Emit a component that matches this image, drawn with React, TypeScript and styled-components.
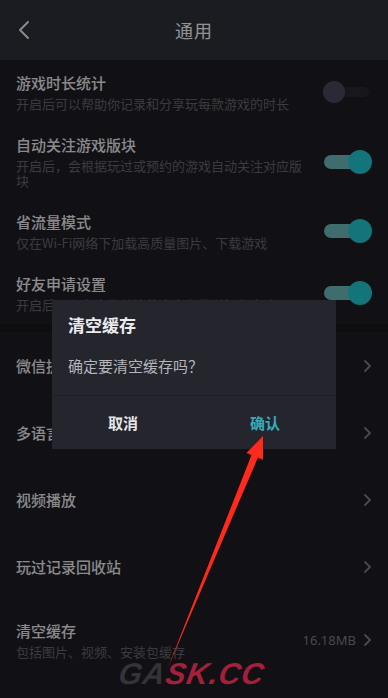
import React, { FC } from 'react';
import styled, { createGlobalStyle } from 'styled-components';

const GlobalStyle = createGlobalStyle`
  html, body {
    margin: 0;
    padding: 0;
    background: #1c1c23;
    overflow: hidden;
  }
  body {
    font-family: "Noto Sans CJK SC", "Noto Sans", "Liberation Sans", sans-serif;
  }
`;

// page colours are the un-dimmed values; the modal mask darkens them
const Page = styled.div`
  position: relative;
  width: 388px;
  height: 698px;
  background: #1c1c23;
  overflow: hidden;
`;

const Header = styled.div`
  height: 60px;
  display: flex;
  align-items: center;
  justify-content: center;
  position: relative;
  background: #2d2f37;
`;

const BackButton = styled.div`
  position: absolute;
  left: 16px;
  top: 20px;
  width: 16px;
  height: 20px;
  display: flex;
  align-items: center;
  justify-content: center;
`;

const HeaderTitle = styled.div`
  font-size: 18px;
  color: #f2f2f4;
  letter-spacing: 1px;
`;

const SwitchList = styled.div`
  display: flex;
  flex-direction: column;
  padding-top: 1px;
`;

const SwitchRow = styled.div`
  display: flex;
  align-items: center;
  justify-content: space-between;
  padding: 12px 17px 12px 16px;
`;

const TextCol = styled.div`
  display: flex;
  flex-direction: column;
  max-width: 290px;
`;

const Title = styled.div`
  font-size: 15px;
  line-height: 20px;
  font-weight: 500;
  color: #e6e6e8;
`;

const Sub = styled.div`
  margin-top: 3px;
  font-size: 13px;
  line-height: 15px;
  color: #636369;
`;

const Toggle = styled.div<{ $on: boolean }>`
  position: relative;
  width: 48px;
  height: 24px;
  flex-shrink: 0;

  &::before {
    content: '';
    position: absolute;
    left: ${(p) => (p.$on ? '1px' : '3px')};
    right: ${(p) => (p.$on ? '10px' : '2px')};
    top: ${(p) => (p.$on ? '5px' : '7px')};
    height: ${(p) => (p.$on ? '14px' : '10px')};
    border-radius: 7px;
    background: ${(p) => (p.$on ? '#69b5b6' : '#29292f')};
  }

  &::after {
    content: '';
    position: absolute;
    top: ${(p) => (p.$on ? '0' : '1px')};
    left: ${(p) => (p.$on ? '25px' : '0')};
    width: ${(p) => (p.$on ? '24px' : '22px')};
    height: ${(p) => (p.$on ? '24px' : '22px')};
    border-radius: 50%;
    background: ${(p) => (p.$on ? '#20c3cc' : '#47475a')};
  }
`;

const SectionGap = styled.div`
  height: 8px;
  background: #16161b;
`;

const NavRow = styled.div<{ $tall?: boolean }>`
  height: ${(p) => (p.$tall ? '80px' : '67px')};
  display: flex;
  align-items: center;
  justify-content: space-between;
  padding: 0 16px;
`;

const NavRight = styled.div`
  display: flex;
  align-items: center;
  gap: 6px;
`;

const SizeText = styled.span`
  font-family: "Noto Sans", "Liberation Sans", sans-serif;
  font-size: 13px;
  color: #7a7a80;
`;

const Mask = styled.div`
  position: absolute;
  inset: 0;
  background: rgba(0, 0, 0, 0.4);
  display: flex;
  justify-content: center;
  padding-top: 300px;
`;

const Dialog = styled.div`
  width: 284px;
  height: 149px;
  background: #25252e;
  display: flex;
  flex-direction: column;
`;

const DialogBody = styled.div`
  height: 96px;
  padding: 14px 16px 0;
  box-sizing: border-box;
  border-bottom: 1px solid #1f1f27;
`;

const DialogTitle = styled.div`
  font-size: 17px;
  line-height: 22px;
  font-weight: 700;
  color: #ececee;
`;

const DialogText = styled.div`
  margin-top: 20px;
  font-size: 15px;
  line-height: 20px;
  color: #b5b5ba;
`;

const DialogFooter = styled.div`
  flex: 1;
  display: grid;
  grid-template-columns: 1fr 1fr;
  align-items: center;
  padding-bottom: 1px;
`;

const DialogButton = styled.div<{ $primary?: boolean }>`
  text-align: center;
  font-size: 15px;
  font-weight: 700;
  color: ${(p) => (p.$primary ? '#3aaab6' : '#e4e4e6')};
`;

const Annotation = styled.svg`
  position: absolute;
  left: 0;
  top: 0;
  pointer-events: none;
`;

const Watermark = styled.div`
  position: absolute;
  left: 119px;
  top: 656px;
  font-family: "Liberation Sans", "DejaVu Sans", sans-serif;
  font-size: 30px;
  line-height: 36px;
  font-weight: 700;
  font-style: italic;
  letter-spacing: 1px;
  transform: skewX(-10deg);
  color: #a31f3c;
`;

const Gray = styled.span`
  color: #333338;
`;

const Chevron: FC<{ color?: string }> = ({ color = '#7a7a84' }) => (
  <svg width="10" height="14" viewBox="0 0 10 14">
    <path d="M3 2 L8 7 L3 12" fill="none" stroke={color} strokeWidth="1.8" strokeLinecap="round" strokeLinejoin="round" />
  </svg>
);

type SwitchItem = { title: string; sub: string; on: boolean };

const switches: SwitchItem[] = [
  { title: '游戏时长统计', sub: '开启后可以帮助你记录和分享玩每款游戏的时长', on: false },
  { title: '自动关注游戏版块', sub: '开启后，会根据玩过或预约的游戏自动关注对应版块', on: true },
  { title: '省流量模式', sub: '仅在Wi-Fi网络下加载高质量图片、下载游戏', on: true },
  { title: '好友申请设置', sub: '开启后，仅允许你关注的人向你发送好友申请', on: true },
];

const navs = ['微信提醒设置', '多语言', '视频播放', '玩过记录回收站'];

const App: FC = () => {
  return (
    <Page>
      <GlobalStyle />
      <Header>
        <BackButton>
          <svg width="12" height="20" viewBox="0 0 12 20">
            <path d="M10 2 L2 10 L10 18" fill="none" stroke="#e8e8ea" strokeWidth="2" strokeLinecap="round" strokeLinejoin="round" />
          </svg>
        </BackButton>
        <HeaderTitle>通用</HeaderTitle>
      </Header>

      <SwitchList>
        {switches.map((s) => (
          <SwitchRow key={s.title}>
            <TextCol>
              <Title>{s.title}</Title>
              <Sub>{s.sub}</Sub>
            </TextCol>
            <Toggle $on={s.on} />
          </SwitchRow>
        ))}
      </SwitchList>

      <SectionGap />

      {navs.map((n) => (
        <NavRow key={n}>
          <Title>{n}</Title>
          <Chevron />
        </NavRow>
      ))}
      <NavRow $tall>
        <TextCol>
          <Title>清空缓存</Title>
          <Sub>包括图片、视频、安装包缓存</Sub>
        </TextCol>
        <NavRight>
          <SizeText>16.18MB</SizeText>
          <Chevron />
        </NavRight>
      </NavRow>

      <Mask>
        <Dialog>
          <DialogBody>
            <DialogTitle>清空缓存</DialogTitle>
            <DialogText>确定要清空缓存吗？</DialogText>
          </DialogBody>
          <DialogFooter>
            <DialogButton>取消</DialogButton>
            <DialogButton $primary>确认</DialogButton>
          </DialogFooter>
        </Dialog>
      </Mask>

      <Annotation width="388" height="698" viewBox="0 0 388 698">
        <polygon
          points="167,670 251.5,455.1 246.4,453 263,436 263,459.8 257.9,457.7"
          fill="#ff2a1c"
        />
      </Annotation>

      <Watermark>
        <Gray>GA</Gray>SK.CC
      </Watermark>
    </Page>
  );
};

export default App;
